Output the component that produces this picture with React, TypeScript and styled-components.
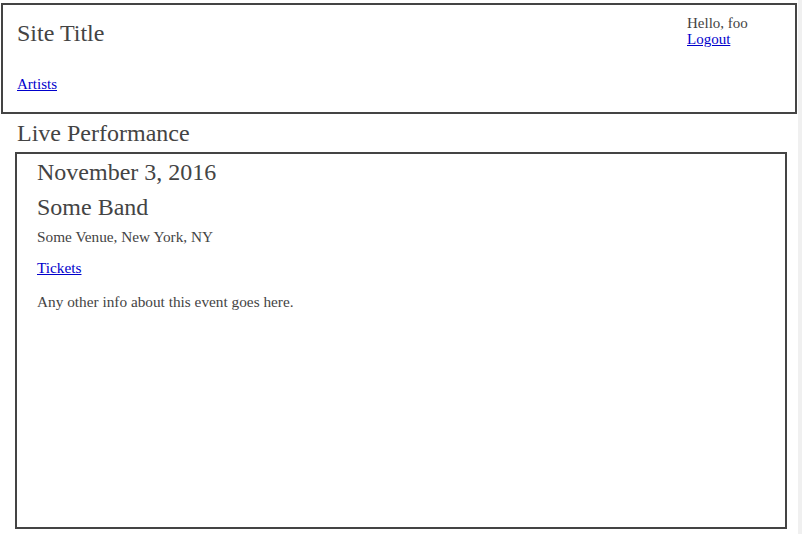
import styled, { createGlobalStyle } from 'styled-components';

const GlobalStyle = createGlobalStyle`
  html, body {
    margin: 0;
    padding: 0;
    background: #ffffff;
  }
  body {
    font-family: "Liberation Serif", "DejaVu Serif", serif;
    color: #444444;
  }
  a {
    color: #0000cc;
    text-decoration: underline;
  }
`;

const Page = styled.div`
  box-sizing: border-box;
  width: 802px;
  height: 534px;
  padding: 3px 1px 0 1px;
  border-right: 4px solid #f0f0f0;
  overflow: hidden;
`;

const SiteHeader = styled.header`
  box-sizing: border-box;
  height: 111px;
  border: 2px solid #444444;
  display: grid;
  grid-template-columns: 1fr 108px;
  padding: 0 0 0 14px;
`;

const Brand = styled.div`
  display: flex;
  flex-direction: column;
`;

const SiteTitle = styled.h1`
  margin: 14px 0 0;
  font-size: 24px;
  font-weight: normal;
  line-height: 28px;
`;

const Nav = styled.nav`
  margin-top: 28px;
  font-size: 15px;
  line-height: 18px;
`;

const UserBox = styled.div`
  padding-top: 10px;
  font-size: 15px;
  line-height: 16px;
  display: flex;
  flex-direction: column;
  align-items: flex-start;
`;

const PageTitle = styled.h2`
  margin: 4px 0 0 16px;
  font-size: 24px;
  font-weight: normal;
  line-height: 30px;
`;

const EventCard = styled.section`
  box-sizing: border-box;
  margin: 4px 10px 0 14px;
  height: 377px;
  border: 2px solid #444444;
  padding: 3px 20px;
`;

const EventHeading = styled.h3`
  margin: 0 0 5px;
  font-size: 24px;
  font-weight: normal;
  line-height: 30px;
`;

const Para = styled.p<{ gap?: number }>`
  margin: ${(p) => p.gap ?? 10}px 0 0;
  font-size: 15.3px;
  line-height: 20px;
`;

export default function App() {
  return (
    <>
      <GlobalStyle />
      <Page>
        <SiteHeader>
          <Brand>
            <SiteTitle>Site Title</SiteTitle>
            <Nav>
              <a href="#">Artists</a>
            </Nav>
          </Brand>
          <UserBox>
            <span>Hello, foo</span>
            <a href="#">Logout</a>
          </UserBox>
        </SiteHeader>
        <PageTitle>Live Performance</PageTitle>
        <EventCard>
          <EventHeading>November 3, 2016</EventHeading>
          <EventHeading>Some Band</EventHeading>
          <Para gap={5}>Some Venue, New York, NY</Para>
          <Para gap={11}>
            <a href="#">Tickets</a>
          </Para>
          <Para gap={14}>Any other info about this event goes here.</Para>
        </EventCard>
      </Page>
    </>
  );
}
